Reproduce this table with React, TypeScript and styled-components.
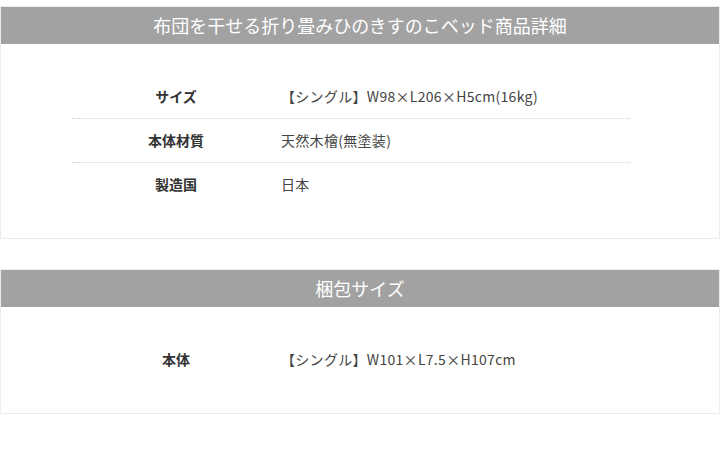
import React from "react";
import styled, {createGlobalStyle} from "styled-components";

const GlobalStyle = createGlobalStyle`
  html, body {
    margin: 0;
    padding: 0;
    background: #ffffff;
  }
  body {
    font-family: "Noto Sans CJK JP", "Noto Sans", sans-serif;
    color: #333333;
  }
`

const Page = styled.div`
  width: 720px;
  padding-top: 6px;
  display: flex;
  flex-direction: column;
  gap: 30px;
`

const Section = styled.section`
  border: 1px solid #ececec;
  background: #ffffff;
`

const Heading = styled.h2`
  margin: 0;
  height: 37px;
  line-height: 36px;
  background-color: #a2a2a2;
  color: #ffffff;
  font-size: 18px;
  font-weight: 400;
  text-align: center;
`

const Body = styled.div`
  padding: 31px 0;
`

const Table = styled.dl`
  margin: 0 0 0 71px;
  width: 558px;
`

const Row = styled.div<{ $last?: boolean }>`
  display: grid;
  grid-template-columns: 208px 1fr;
  align-items: center;
  height: 44px;
  padding-bottom: 2px;
  box-sizing: border-box;
  border-bottom: ${p => (p.$last ? "none" : "1px dotted #cfcfcf")};
  font-size: 14px;
`

const Label = styled.dt`
  margin: 0;
  text-align: center;
  font-weight: 700;
  color: #333333;
`

const Value = styled.dd`
  margin: 0;
  padding-left: 1px;
  letter-spacing: 0.3px;
  color: #444444;
`

type Spec = { label: string; value: string };

const details: Spec[] = [
  {label: "サイズ", value: "【シングル】W98×L206×H5cm(16kg)"},
  {label: "本体材質", value: "天然木檜(無塗装)"},
  {label: "製造国", value: "日本"},
];

const packing: Spec[] = [
  {label: "本体", value: "【シングル】W101×L7.5×H107cm"},
];

const SpecBox = ({title, rows}: { title: string; rows: Spec[] }) => (
  <Section>
    <Heading>{title}</Heading>
    <Body>
      <Table>
        {rows.map((r, i) => (
          <Row key={r.label} $last={i === rows.length - 1}>
            <Label>{r.label}</Label>
            <Value>{r.value}</Value>
          </Row>
        ))}
      </Table>
    </Body>
  </Section>
)

const App = () => {
  return (
    <>
      <GlobalStyle/>
      <Page>
        <SpecBox title="布団を干せる折り畳みひのきすのこベッド商品詳細" rows={details}/>
        <SpecBox title="梱包サイズ" rows={packing}/>
      </Page>
    </>
  )
}

export default App
